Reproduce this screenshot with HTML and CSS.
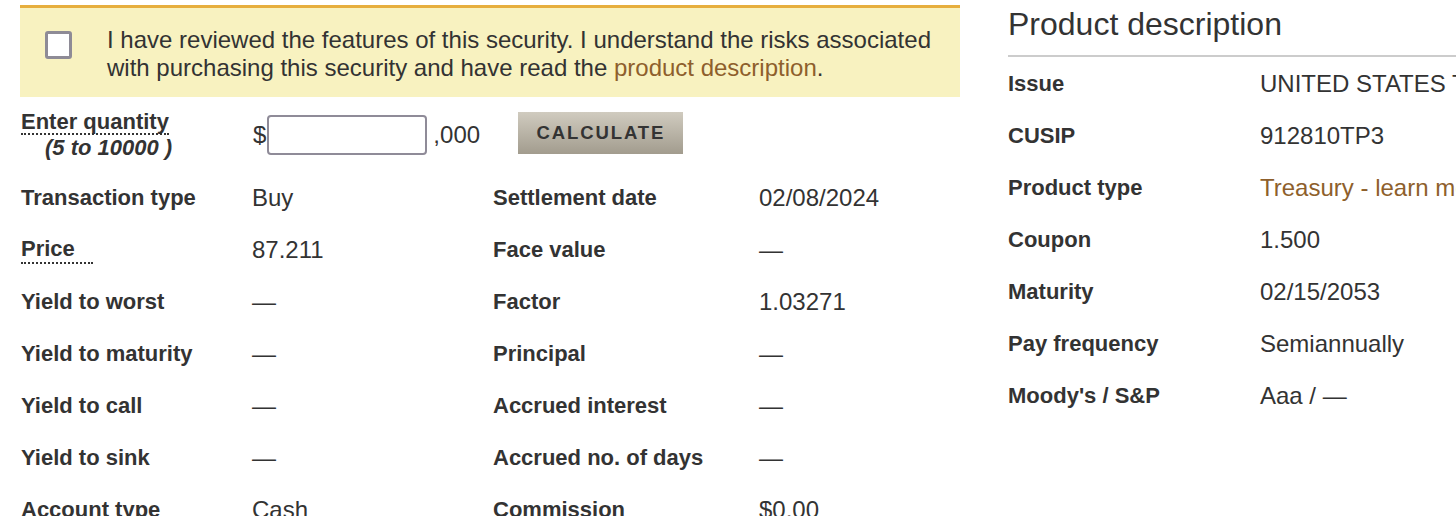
FILE: index.html
```html
<!DOCTYPE html>
<html lang="en">
<head>
<meta charset="utf-8">
<title>Trade</title>
<link rel="stylesheet" href="styles.css">
</head>
<body>
<div class="page">
  <section class="trade">
    <div class="ack">
      <span class="box"></span>
      <p class="ack-text">I have reviewed the features of this security. I understand the risks associated with purchasing this security and have read the <a href="#" class="link">product description</a>.</p>
    </div>
    <div class="qty-row">
      <div class="qty-label">
        <span class="dotted">Enter quantity</span>
        <span class="range">(5 to 10000 )</span>
      </div>
      <div class="qty-input">
        <span class="cur">$</span>
        <input type="text" class="field">
        <span class="thou">,000</span>
      </div>
      <button class="calc">CALCULATE</button>
    </div>
    <div class="details">
      <div class="lbl">Transaction type</div><div class="val">Buy</div>
      <div class="lbl">Settlement date</div><div class="val">02/08/2024</div>
      <div class="lbl"><span class="dotted price">Price</span></div><div class="val">87.211</div>
      <div class="lbl">Face value</div><div class="val">—</div>
      <div class="lbl">Yield to worst</div><div class="val">—</div>
      <div class="lbl">Factor</div><div class="val">1.03271</div>
      <div class="lbl">Yield to maturity</div><div class="val">—</div>
      <div class="lbl">Principal</div><div class="val">—</div>
      <div class="lbl">Yield to call</div><div class="val">—</div>
      <div class="lbl">Accrued interest</div><div class="val">—</div>
      <div class="lbl">Yield to sink</div><div class="val">—</div>
      <div class="lbl">Accrued no. of days</div><div class="val">—</div>
      <div class="lbl">Account type</div><div class="val">Cash</div>
      <div class="lbl">Commission</div><div class="val">$0.00</div>
    </div>
  </section>
  <aside class="product">
    <h2 class="heading">Product description</h2>
    <div class="pgrid">
      <div class="lbl">Issue</div><div class="val">UNITED STATES TREAS BD</div>
      <div class="lbl">CUSIP</div><div class="val">912810TP3</div>
      <div class="lbl">Product type</div><div class="val"><a href="#" class="link">Treasury - learn more</a></div>
      <div class="lbl">Coupon</div><div class="val">1.500</div>
      <div class="lbl">Maturity</div><div class="val">02/15/2053</div>
      <div class="lbl">Pay frequency</div><div class="val">Semiannually</div>
      <div class="lbl">Moody's / S&amp;P</div><div class="val">Aaa / —</div>
    </div>
  </aside>
</div>
</body>
</html>
```
FILE: styles.css
```css
html, body {
  margin: 0;
  padding: 0;
  background: #fff;
  overflow: hidden;
}
body {
  font-family: "Liberation Sans", Arial, sans-serif;
  color: #333;
}
.page {
  display: flex;
  align-items: flex-start;
  gap: 48px;
  width: 1600px;
}
.trade {
  width: 940px;
  padding: 5px 0 0 20px;
  flex: none;
}
.ack {
  display: flex;
  align-items: flex-start;
  background: #f8f2c0;
  border-top: 3px solid #e6ae3e;
  padding: 18px 0 0 25px;
  height: 71px;
}
.box {
  flex: none;
  width: 27px;
  height: 28px;
  box-sizing: border-box;
  border: 3px solid #8e8b96;
  border-radius: 3px;
  background: #fff;
  margin: 5px 35px 0 0;
}
.ack-text {
  margin: 0;
  font-size: 24px;
  line-height: 28px;
  width: 830px;
}
.link {
  color: #8e5f2c;
  text-decoration: none;
}
.qty-row {
  display: flex;
  align-items: center;
  margin: 11px 0;
  height: 52px;
}
.qty-label {
  width: 232px;
  display: flex;
  flex-direction: column;
  align-items: flex-start;
  font-size: 22px;
  font-weight: bold;
  line-height: 26px;
  padding: 4px 0 0 1px;
}
.dotted {
  border-bottom: 2px dotted #333;
  line-height: 22px;
}
.range {
  font-style: italic;
  padding-left: 24px;
}
.qty-input {
  display: flex;
  align-items: center;
  font-size: 24px;
  margin-top: 1px;
}
.field {
  width: 160px;
  height: 40px;
  box-sizing: border-box;
  border: 2px solid #8f8b98;
  border-radius: 4px;
  margin: 0 6px 0 1px;
  padding: 0;
  background: #fff;
}
.thou {
  width: 46px;
}
.calc {
  margin-left: 39px;
  margin-top: -3px;
  width: 165px;
  height: 42px;
  border: none;
  background: linear-gradient(#d0cbbf, #a29c8e);
  font-family: "Liberation Sans", Arial, sans-serif;
  font-weight: bold;
  font-size: 18.5px;
  letter-spacing: 1.9px;
  color: #333;
  padding: 0;
}
.details {
  display: grid;
  grid-template-columns: 232px 240px 267px auto;
  grid-auto-rows: 52px;
  align-items: center;
}
.lbl {
  font-size: 22px;
  font-weight: bold;
  padding: 2px 0 0 1px;
}
.val {
  font-size: 24px;
  padding-top: 2px;
}
.price {
  display: inline-block;
  width: 72px;
  line-height: 26px;
}
.product {
  width: 520px;
  flex: none;
}
.heading {
  margin: 0;
  font-size: 32px;
  font-weight: normal;
  line-height: 38px;
  padding: 5px 0 12px;
  border-bottom: 2px solid #ccc;
}
.pgrid {
  display: grid;
  grid-template-columns: 252px auto;
  grid-auto-rows: 52px;
  align-items: center;
  white-space: nowrap;
}
.pgrid .lbl {
  padding-left: 0;
}
```
